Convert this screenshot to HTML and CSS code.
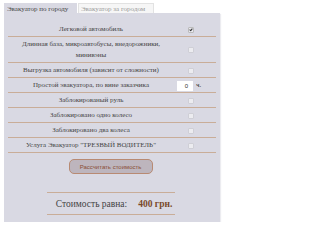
FILE: index.html
```html
<!DOCTYPE html>
<html>
<head>
<meta charset="utf-8">
<link rel="stylesheet" href="styles.css">
</head>
<body>
<div class="wrap">
  <div class="tabs">
    <div class="tab active">Эвакуатор по городу</div>
    <div class="tab">Эвакуатор за городом</div>
  </div>
  <div class="panel">
    <div class="rows">
      <div class="row"><div class="label">Легковой автомобиль</div><div class="ctl"><span class="cb checked"></span></div></div>
      <div class="row"><div class="label">Длинная база, микроавтобусы, внедорожники,<br>минивэны</div><div class="ctl"><span class="cb"></span></div></div>
      <div class="row"><div class="label">Выгрузка автомобиля (зависит от сложности)</div><div class="ctl"><span class="cb"></span></div></div>
      <div class="row"><div class="label">Простой эвакуатора, по вине заказчика</div><div class="ctl"><span class="num">0</span><span class="unit">ч.</span></div></div>
      <div class="row"><div class="label">Заблокированый руль</div><div class="ctl"><span class="cb"></span></div></div>
      <div class="row"><div class="label">Заблокировано одно колесо</div><div class="ctl"><span class="cb"></span></div></div>
      <div class="row"><div class="label">Заблокировано два колеса</div><div class="ctl"><span class="cb"></span></div></div>
      <div class="row"><div class="label">Услуга Эвакуатор "ТРЕЗВЫЙ ВОДИТЕЛЬ"</div><div class="ctl"><span class="cb"></span></div></div>
    </div>
    <div class="btnrow"><button class="btn">Рассчитать стоимость</button></div>
    <div class="result">
      <span class="rlabel">Стоимость равна:</span><span class="rval">400 грн.</span>
    </div>
  </div>
</div>
</body>
</html>
```
FILE: styles.css
```css
html, body {
  margin: 0;
  padding: 0;
  background: #ffffff;
}
.wrap {
  width: 216px;
  margin: 3px 0 0 4px;
  font-family: "Liberation Serif", serif;
  color: #333;
}
.tabs {
  display: flex;
  height: 10px;
}
.tab {
  font-size: 7px;
  line-height: 10px;
  padding: 0 1px 0 2px;
  color: #999;
  background: #f6f6f6;
  border: 1px solid #e2e2e2;
  border-bottom: none;
  box-sizing: border-box;
  margin-left: 1px;
  width: 76px;
  white-space: nowrap;
  overflow: hidden;
}
.tab.active {
  background: #d9d9e3;
  color: #444;
  border-color: #d9d9e3;
  margin-left: 0;
  width: 73px;
}
.panel {
  background: #d9d9e3;
  padding: 8px 4px 3px 4px;
  box-shadow: 1px 1px 1px #ececf0;
}
.rows {
  display: flex;
  flex-direction: column;
}
.row {
  display: flex;
  align-items: center;
  border-bottom: 1px solid #c9ad98;
  font-size: 7px;
  line-height: 11px;
  padding: 2px 0 1px 0;
  min-height: 11px;
}
.row:first-child {
  padding-top: 3px;
}
.label {
  flex: 1;
  text-align: center;
  color: #444;
}
.ctl {
  width: 42px;
  display: flex;
  align-items: center;
  padding-left: 14px;
  box-sizing: border-box;
}
.cb {
  display: block;
  width: 4px;
  height: 4px;
  border: 1px solid #cfcfd6;
  border-radius: 1px;
  background: #ececf0;
}
.cb.checked {
  background: #e8e8ee;
  border-color: #bbb;
  position: relative;
}
.cb.checked::after {
  content: "";
  position: absolute;
  left: 1px;
  top: 0;
  width: 1px;
  height: 2px;
  border-right: 1px solid #333;
  border-bottom: 1px solid #333;
  transform: rotate(40deg);
}
.num {
  display: block;
  width: 16px;
  height: 10px;
  background: #fff;
  font-family: "Liberation Sans", sans-serif;
  font-size: 6px;
  line-height: 10px;
  text-align: right;
  padding-right: 5px;
  box-sizing: border-box;
  color: #333;
  margin-left: -11px;
}
.unit {
  margin-left: 3px;
  font-size: 7px;
}
.btnrow {
  display: flex;
  justify-content: center;
  padding: 6px 0 0 0;
}
.btn {
  font-family: "Liberation Sans", sans-serif;
  font-size: 6px;
  color: #8a4e35;
  background: #bdb5bd;
  border: 1px solid #b88a73;
  border-radius: 5px;
  width: 84px;
  height: 15px;
  padding: 0;
  margin-left: -3px;
}
.result {
  margin: 18px auto 4px auto;
  width: 128px;
  border-top: 1px solid #c9ad98;
  border-bottom: 1px solid #c9ad98;
  height: 21px;
  display: flex;
  align-items: center;
  justify-content: center;
  font-size: 9.5px;
  position: relative;
  left: -1px;
}
.rlabel {
  color: #444;
  margin-left: 6px;
}
.rval {
  color: #7a4a2a;
  font-weight: bold;
  margin-left: 11px;
}
```
